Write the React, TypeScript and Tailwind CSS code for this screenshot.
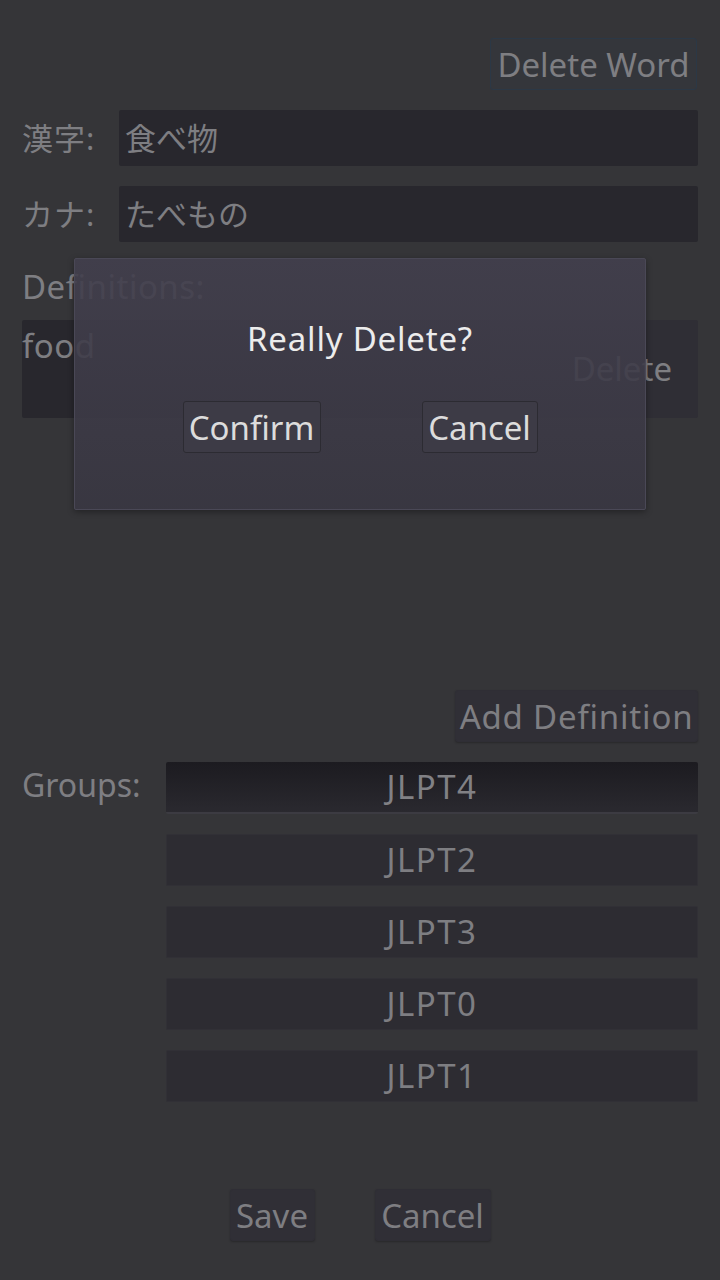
import type { FC, ReactNode } from 'react';

// ─── Data ───────────────────────────────────────────────────────────────────

const GROUPS = [
  { name: 'JLPT4', selected: true },
  { name: 'JLPT2', selected: false },
  { name: 'JLPT3', selected: false },
  { name: 'JLPT0', selected: false },
  { name: 'JLPT1', selected: false },
];

const FONT = "font-['Noto_Sans','Noto_Sans_CJK_JP',sans-serif]";

// ─── Small pieces ───────────────────────────────────────────────────────────

const FlatButton: FC<{ children: ReactNode; className?: string }> = ({ children, className = '' }) => (
  <button
    className={`h-[52px] flex items-center justify-center rounded-[3px] border border-[#2f2e35] bg-[#302f36] text-[33px] leading-none text-[#7e7e82] shadow-[0_1px_2px_rgba(0,0,0,0.25)] ${className}`}
  >
    {children}
  </button>
);

const FieldRow: FC<{ label: string; value: string }> = ({ label, value }) => (
  <div className="flex items-center h-[56px]">
    <span className="w-[97px] shrink-0 text-[31px] text-[#7e7e82] tracking-[1px]">{label}</span>
    <div className="flex-1 h-full flex items-center px-[6px] rounded-[2px] bg-[#28272d] text-[31px] text-[#7e7e82]">
      {value}
    </div>
  </div>
);

// ─── Component ──────────────────────────────────────────────────────────────

const App: FC = () => {
  return (
    <div className={`relative w-[720px] h-[1280px] overflow-hidden bg-[#353538] ${FONT}`}>
      <div className="flex flex-col px-[22px] pt-[38px]">
        {/* Delete word */}
        <div className="flex justify-end pr-px">
          <button className="w-[207px] h-[52px] flex items-center justify-center rounded-[3px] border border-[#2b3846] bg-[#34363b] text-[33px] leading-none text-[#7e7e82]">
            Delete Word
          </button>
        </div>

        <div className="mt-[20px] flex flex-col gap-[20px]">
          <FieldRow label="漢字:" value="食べ物" />
          <FieldRow label="カナ:" value="たべもの" />
        </div>

        {/* Definitions */}
        <div className="h-[78px] pt-[29px] text-[33px] leading-[32px] tracking-[0.5px] text-[#7e7e82]">Definitions:</div>
        <div className="flex h-[98px]">
          <div className="flex-1 bg-[#28272d] rounded-l-[2px] pt-[10px] text-[33px] leading-[32px] tracking-[0.5px] text-[#7e7e82]">
            food
          </div>
          <div className="w-[208px] flex items-center justify-end pr-[26px] bg-[#2f2e35] rounded-r-[2px] text-[33px] text-[#7e7e82]">
            Delete
          </div>
        </div>

        {/* Add definition */}
        <div className="mt-[272px] flex justify-end">
          <FlatButton className="w-[243px] tracking-[0.8px]">Add Definition</FlatButton>
        </div>

        {/* Groups */}
        <div className="mt-[20px] flex">
          <span className="w-[144px] shrink-0 pt-[4px] text-[32px] leading-[38px] text-[#7e7e82]">Groups:</span>
          <div className="flex-1 flex flex-col gap-[20px]">
            {GROUPS.map((g) => (
              <div
                key={g.name}
                className={
                  g.selected
                    ? 'h-[52px] flex items-center justify-center rounded-[2px] bg-gradient-to-b from-[#1c1b20] to-[#2a292f] border-b-2 border-[#3c3b42] text-[33px] tracking-[1.5px] text-[#818185]'
                    : 'h-[52px] flex items-center justify-center rounded-[2px] bg-[#2d2c32] border border-[#313036] text-[33px] tracking-[1.5px] text-[#7e7e82]'
                }
              >
                {g.name}
              </div>
            ))}
          </div>
        </div>

        {/* Save / Cancel */}
        <div className="mt-[87px] flex justify-center gap-[60px]">
          <FlatButton className="w-[85px]">Save</FlatButton>
          <FlatButton className="w-[116px]">Cancel</FlatButton>
        </div>
      </div>

      {/* Confirm dialog */}
      <div className="absolute left-[74px] top-[258px] w-[572px] h-[252px] rounded-[2px] border border-[#4a4856] bg-gradient-to-b from-[#423f4d]/90 to-[#393742]/90 shadow-[0_2px_6px_rgba(0,0,0,0.35)] flex flex-col items-center">
        <p className="mt-[60px] text-[33px] leading-[40px] tracking-[0.8px] text-[#ececec]">Really Delete?</p>
        <div className="mt-[42px] flex gap-[101px]">
          <button className="w-[138px] h-[52px] flex items-center justify-center rounded-[3px] border border-[#2c2b32] bg-[#3d3b46] text-[33px] leading-none text-[#dcdcdc]">
            Confirm
          </button>
          <button className="w-[116px] h-[52px] flex items-center justify-center rounded-[3px] border border-[#2c2b32] bg-[#3d3b46] text-[33px] leading-none text-[#dcdcdc]">
            Cancel
          </button>
        </div>
      </div>
    </div>
  );
};

export default App;
